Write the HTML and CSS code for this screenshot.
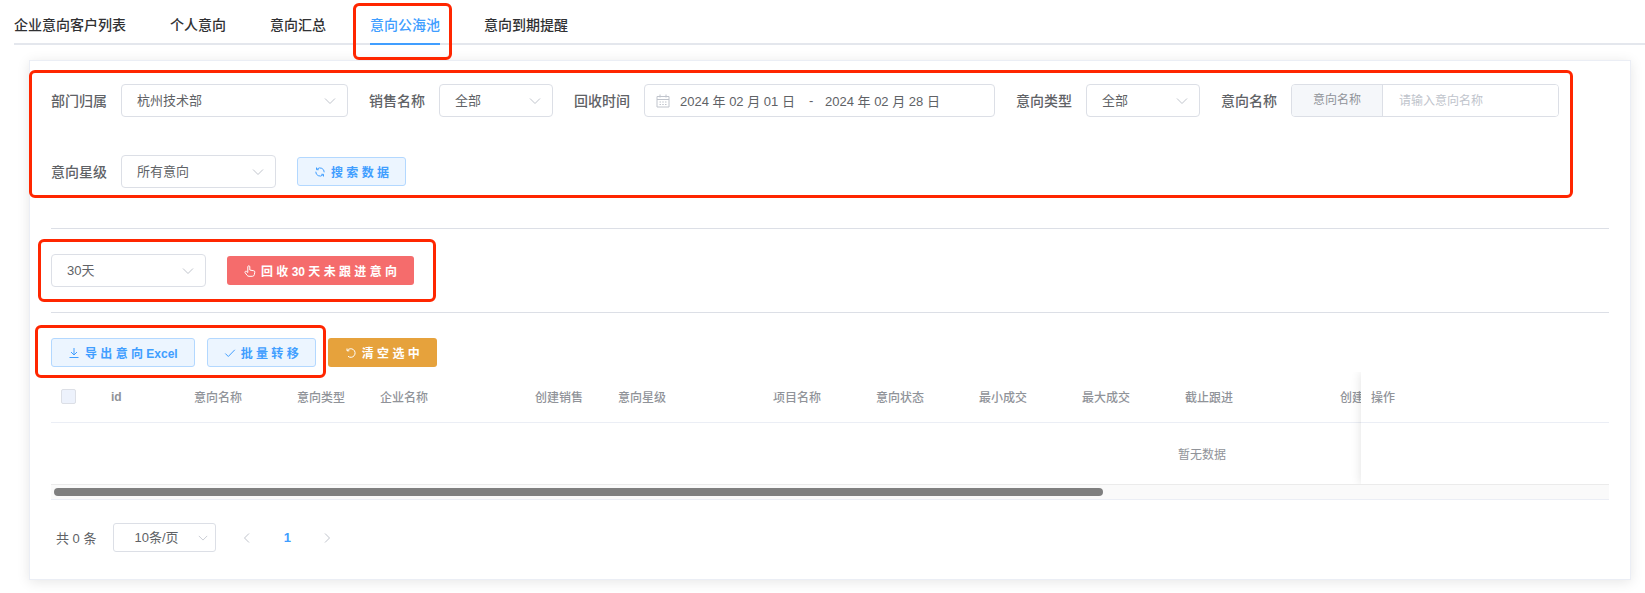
FILE: index.html
```html
<!DOCTYPE html>
<html lang="zh-CN">
<head>
    <meta charset="UTF-8">
    <meta name="viewport" content="width=device-width, initial-scale=1.0">
    <title>意向公海池</title>
    <link rel="stylesheet" href="styles.css">
</head>
<body>
    <!-- общие иконки -->
    <svg class="sprite" aria-hidden="true">
        <symbol id="down" viewBox="0 0 12 12"><path d="M1 3.5l5 5 5-5"/></symbol>
        <symbol id="left" viewBox="0 0 12 12"><path d="M8 1.5L3.5 6 8 10.5"/></symbol>
        <symbol id="right" viewBox="0 0 12 12"><path d="M4 1.5L8.5 6 4 10.5"/></symbol>
    </svg>

    <nav class="tabs">
        <a href="#list">企业意向客户列表</a>
        <a href="#personal">个人意向</a>
        <a href="#summary">意向汇总</a>
        <a class="active marked" href="#pool">意向公海池</a>
        <a href="#expire">意向到期提醒</a>
    </nav>

    <main class="card">
        <form class="filters marked">
            <div class="form-item">
                <label for="department">部门归属</label>
                <div class="select wide">
                    <select id="department"><option>杭州技术部</option></select>
                    <svg><use href="#down"/></svg>
                </div>
            </div>
            <div class="form-item">
                <label for="seller">销售名称</label>
                <div class="select small">
                    <select id="seller"><option>全部</option></select>
                    <svg><use href="#down"/></svg>
                </div>
            </div>
            <div class="form-item">
                <label for="dateStart">回收时间</label>
                <div class="date-range">
                    <svg viewBox="0 0 14 14"><path d="M1 2.5h12v10.500H1zM1 5.500h12M4 .5v3M10 .5v3M3.500 8h1.500M6.250 8h1.500M9 8h1.500M3.500 10.500h1.500M6.250 10.500h1.500M9 10.500h1.500"/></svg>
                    <input type="text" id="dateStart" value="2024 年 02 月 01 日">
                    <span>-</span>
                    <input type="text" aria-label="结束时间" value="2024 年 02 月 28 日">
                </div>
            </div>
            <div class="form-item">
                <label for="type">意向类型</label>
                <div class="select small">
                    <select id="type"><option>全部</option></select>
                    <svg><use href="#down"/></svg>
                </div>
            </div>
            <div class="form-item">
                <label for="name">意向名称</label>
                <div class="input-group">
                    <span>意向名称</span>
                    <input type="text" id="name" placeholder="请输入意向名称">
                </div>
            </div>
            <div class="form-item">
                <label for="star">意向星级</label>
                <div class="select">
                    <select id="star"><option>所有意向</option></select>
                    <svg><use href="#down"/></svg>
                </div>
            </div>
            <button type="button" class="btn plain">
                <svg viewBox="0 0 12 12"><path d="M3.200 3A4.200 4.200 0 0 1 10.200 6.300M8.800 9A4.200 4.200 0 0 1 1.800 5.700M2.500 1.500v2.200h2.200M9.500 10.500V8.300H7.300"/></svg>
                搜 索 数 据
            </button>
        </form>

        <section class="recycle">
            <div class="recycle-row marked">
                <div class="select">
                    <select aria-label="天数"><option>30天</option></select>
                    <svg><use href="#down"/></svg>
                </div>
                <button type="button" class="btn danger">
                    <svg viewBox="0 0 12 12"><path d="M3.800 7.500V1.800a1 1 0 0 1 2 0V5l4 .8a1.200 1.200 0 0 1 1 1.400l-.5 2.500a2 2 0 0 1-2 1.600H5a2.500 2.500 0 0 1-2-1L1 7.500a1 1 0 0 1 1.400-1.200z"/></svg>
                    回 收 30 天 未 跟 进 意 向
                </button>
            </div>
        </section>

        <div class="actions">
            <div class="actions-group marked">
                <button type="button" class="btn plain">
                    <svg viewBox="0 0 12 12"><path d="M6 1v7M3 5l3 3 3-3M1.500 10.500h9"/></svg>
                    导 出 意 向 Excel
                </button>
                <button type="button" class="btn plain">
                    <svg viewBox="0 0 12 12"><path d="M1.300 6.500l3 3 6.500-6.700"/></svg>
                    批 量 转 移
                </button>
            </div>
            <button type="button" class="btn warning">
                <svg viewBox="0 0 12 12"><path d="M2.300 3.500A4.300 4.300 0 1 1 3 9.300M2 1.500v2.300h2.300"/></svg>
                清 空 选 中
            </button>
        </div>

        <div class="table-box">
            <div class="table-scroll">
                <table class="table">
                    <colgroup>
                        <col class="col-check">
                        <col class="col-s">
                        <col class="col-m">
                        <col class="col-s">
                        <col class="col-l">
                        <col class="col-s">
                        <col class="col-l">
                        <col class="col-m">
                        <col class="col-m">
                        <col class="col-m">
                        <col class="col-m">
                        <col class="col-l">
                        <col>
                    </colgroup>
                    <thead>
                        <tr>
                            <th><input type="checkbox" class="checkbox" aria-label="全选" disabled></th>
                            <th class="id">id</th>
                            <th>意向名称</th>
                            <th>意向类型</th>
                            <th>企业名称</th>
                            <th>创建销售</th>
                            <th>意向星级</th>
                            <th>项目名称</th>
                            <th>意向状态</th>
                            <th>最小成交</th>
                            <th>最大成交</th>
                            <th>截止跟进</th>
                            <th>创建</th>
                        </tr>
                    </thead>
                    <tbody>
                        <tr><td colspan="13">暂无数据</td></tr>
                    </tbody>
                </table>
            </div>
            <table class="table table-fixed">
                <thead>
                    <tr><th>操作</th></tr>
                </thead>
                <tbody>
                    <tr><td></td></tr>
                </tbody>
            </table>
            <div class="scrollbar"><div class="thumb"></div></div>
        </div>

        <div class="pagination">
            <span>共 0 条</span>
            <div class="select page-size">
                <select aria-label="每页条数"><option>10条/页</option></select>
                <svg><use href="#down"/></svg>
            </div>
            <div class="pager">
                <button type="button" aria-label="上一页" disabled><svg><use href="#left"/></svg></button>
                <button type="button" class="current">1</button>
                <button type="button" aria-label="下一页" disabled><svg><use href="#right"/></svg></button>
            </div>
        </div>
    </main>
</body>
</html>
```
FILE: styles.css
```css
* {
    box-sizing: border-box;
}
body {
    margin: 0;
    font-family: "Liberation Sans", "Noto Sans CJK SC", sans-serif;
    font-size: 13px;
    color: #606266;
    background-color: #fff;
    overflow-x: hidden;
}
input, select, button {
    font-family: inherit;
    font-size: 13px;
    color: inherit;
}
svg {
    width: 12px;
    height: 12px;
    fill: none;
    stroke: currentColor;
    flex-shrink: 0;
}
.sprite {
    display: none;
}

/* красная рамка вокруг блока */
.marked {
    position: relative;
}
.marked::after {
    content: "";
    position: absolute;
    border: 3px solid #ff2600;
    border-radius: 6px;
    pointer-events: none;
}

.tabs {
    display: flex;
    gap: 44px;
    margin-left: 14px;
    border-bottom: 2px solid #e4e7ed;
}
.tabs a {
    padding-top: 8px;
    margin-bottom: -2px;
    border-bottom: 2px solid transparent;
    font-size: 14px;
    font-weight: 500;
    line-height: 35px;
    color: #303133;
    text-decoration: none;
}
.tabs a.active {
    color: #409eff;
    border-bottom-color: #409eff;
}
.tabs .marked::after {
    inset: 3px -12px -17px -17px;
}

.card {
    margin: 15px 14px 12px 29px;
    padding: 23px 21px 27px;
    border: 1px solid #ebeef5;
    box-shadow: 0 2px 12px rgba(0, 0, 0, 0.1);
}

.filters {
    display: flex;
    flex-wrap: wrap;
    align-items: center;
    gap: 38px 21px;
    padding-bottom: 40px;
}
.filters.marked::after {
    inset: -14px 36px 30px -22px;
}
.form-item {
    display: flex;
    align-items: center;
    gap: 14px;
}
.form-item label {
    padding-bottom: 2px;
    font-size: 14px;
    font-weight: 500;
}

.select {
    display: grid;
    align-items: center;
    width: 155px;
}
.select select {
    grid-area: 1 / 1;
    width: 100%;
    height: 33px;
    padding: 0 30px 0 15px;
    border: 1px solid #dcdfe6;
    border-radius: 4px;
    background-color: #fff;
    appearance: none;
}
.select svg {
    grid-area: 1 / 1;
    justify-self: end;
    margin-right: 12px;
    color: #c0c4cc;
    pointer-events: none;
}
.select.wide {
    width: 227px;
}
.select.small {
    width: 114px;
}

.date-range {
    display: flex;
    align-items: center;
    width: 351px;
    height: 33px;
    padding: 0 11px;
    border: 1px solid #dcdfe6;
    border-radius: 4px;
}
.date-range svg {
    width: 14px;
    height: 14px;
    margin-right: 10px;
    color: #c0c4cc;
}
.date-range input {
    width: 129px;
    padding: 0;
    border: none;
    outline: none;
}
.date-range span {
    width: 16px;
}

.input-group {
    display: flex;
    width: 268px;
    height: 33px;
    border: 1px solid #dcdfe6;
    border-radius: 4px;
    font-size: 12px;
    overflow: hidden;
}
.input-group span {
    padding: 0 21px;
    border-right: 1px solid #dcdfe6;
    line-height: 31px;
    color: #909399;
    background-color: #f5f7fa;
}
.input-group input {
    flex: 1;
    min-width: 0;
    padding: 0 16px;
    border: none;
    font-size: 12px;
}
.input-group input::placeholder {
    color: #c0c4cc;
}

.btn {
    display: inline-flex;
    align-items: center;
    gap: 5px;
    height: 29px;
    padding: 0 16px;
    border: 1px solid transparent;
    border-radius: 3px;
    font-size: 12px;
    font-weight: 600;
    color: #fff;
    cursor: pointer;
}
.btn.plain {
    color: #409eff;
    background-color: #ecf5ff;
    border-color: #b3d8ff;
}
.btn.danger {
    background-color: #f56c6c;
}
.btn.warning {
    background-color: #e6a23c;
}

.recycle {
    padding: 25px 0;
    border-top: 1px solid #dcdfe6;
    border-bottom: 1px solid #dcdfe6;
}
.recycle-row {
    display: inline-flex;
    align-items: center;
    gap: 21px;
    vertical-align: top;
}
.recycle-row.marked::after {
    inset: -15px -22px -15px -13px;
}

.actions {
    display: flex;
    gap: 12px;
    padding: 25px 0 5px;
}
.actions-group {
    display: flex;
    gap: 12px;
}
.actions-group.marked::after {
    inset: -13px -10px -11px -16px;
}

.table-box {
    position: relative;
    overflow: hidden;
}
.table-scroll {
    margin-right: 248px;
    overflow: hidden;
}
.table {
    width: 2302px;
    table-layout: fixed;
    border-collapse: collapse;
    font-size: 12px;
    color: #909399;
}
.table th {
    height: 50px;
    padding: 0 10px;
    border-bottom: 1px solid #ebeef5;
    font-weight: 500;
    text-align: left;
}
.table th.id {
    font-weight: 700;
}
.table td {
    height: 62px;
    padding: 0;
    text-align: center;
}
.col-check {
    width: 50px;
}
.col-s {
    width: 83px;
}
.col-m {
    width: 103px;
}
.col-l {
    width: 155px;
}
.table-fixed {
    position: absolute;
    top: 0;
    right: 0;
    width: 248px;
    background-color: #fff;
    box-shadow: 0 0 10px rgba(0, 0, 0, 0.12);
}
.checkbox {
    display: block;
    width: 15px;
    height: 15px;
    margin: 0;
    border: 1px solid #dcdfe6;
    border-radius: 2px;
    background-color: #edf2fc;
    appearance: none;
}
.scrollbar {
    position: relative;
    padding: 3px;
    border-top: 1px solid #ebebeb;
    border-bottom: 1px solid #ebeef5;
    background-color: #fafafa;
}
.thumb {
    width: 67.6%;
    height: 8px;
    border-radius: 4px;
    background-color: #7f7f7f;
}

.pagination {
    display: flex;
    align-items: center;
    gap: 17px;
    padding: 23px 5px 0;
}
.page-size {
    width: 103px;
}
.page-size select {
    height: 29px;
    padding: 0 20px;
    border-radius: 3px;
}
.page-size svg {
    width: 10px;
    height: 10px;
    margin-right: 8px;
}
.pager {
    display: flex;
    gap: 12px;
}
.pager button {
    display: flex;
    align-items: center;
    justify-content: center;
    width: 28px;
    height: 29px;
    padding: 0;
    border: none;
    color: #c0c4cc;
    background: none;
}
.pager .current {
    font-weight: 700;
    color: #409eff;
}
```
